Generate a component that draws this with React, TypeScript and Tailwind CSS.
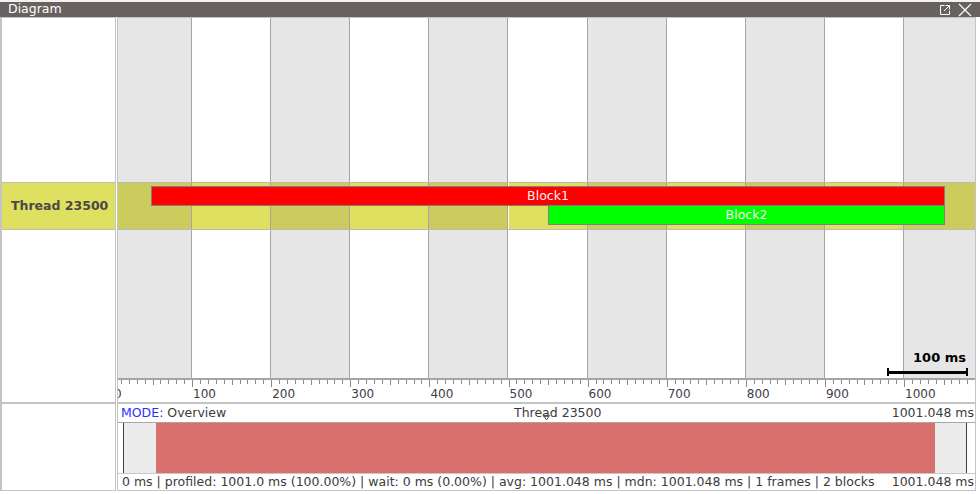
import React from 'react';

const PX_PER_MS = 0.791;
const ORIGIN = -5; // x of 0 ms inside the grid canvas
const ms = (t: number) => ORIGIN + t * PX_PER_MS;

const columns = Array.from({ length: 12 }, (_, k) => k);
const ticks = Array.from({ length: 112 }, (_, i) => i);

const TitleIcons = () => (
  <div className="flex items-center gap-[7px] mr-[8px]">
    <svg width="12" height="12" viewBox="0 0 12 12" fill="none" stroke="white" strokeWidth="1">
      <path d="M5.5 1.5 H1.5 V10.5 H10.5 V6.5" />
      <path d="M6.5 1.5 H10.5 V5.5" />
      <path d="M10.5 1.5 L5 7" />
    </svg>
    <svg width="14" height="14" viewBox="0 0 14 14" fill="none" stroke="white" strokeWidth="1.2">
      <path d="M1 1 L13 13 M13 1 L1 13" />
    </svg>
  </div>
);

const App = () => {
  return (
    <div className="w-[980px] h-[494px] bg-white overflow-hidden flex flex-col font-['DejaVu_Sans',sans-serif] text-[12.5px] text-[#3b3b3b]">
      <div className="h-[2px] bg-[#f2f2f2]" />
      {/* Title bar */}
      <div className="h-[15px] bg-[#67625f] flex items-center justify-between text-white leading-none">
        <span className="pl-[8px] text-[12.5px]">Diagram</span>
        <TitleIcons />
      </div>

      {/* Diagram */}
      <div className="flex h-[386px]">
        <div className="w-[116px] border-t border-b border-l-2 border-r border-[#c4c4c4] flex flex-col">
          <div className="h-[164px]" />
          <div className="h-[48px] bg-[#dfdf60] border-y border-[#bdbdbd] flex items-center pl-[9px] font-bold text-[12.5px] text-[#4a4848]">
            Thread 23500
          </div>
          <div className="flex-1" />
        </div>
        <div className="w-[859px] ml-[1px] border border-[#c4c4c4] flex flex-col">
          <div className="relative h-[360px] overflow-hidden">
            {columns.map((k) => {
              const grey = k % 2 === 0;
              return (
                <div
                  key={k}
                  className="absolute top-0 bottom-0 flex flex-col border-r border-[#a9a3a3]"
                  style={{ left: ms(k * 100), width: 100 * PX_PER_MS }}
                >
                  <div className={`h-[164px] ${grey ? 'bg-[#e6e6e6]' : 'bg-white'}`} />
                  <div className={`h-[48px] ${grey ? 'bg-[#cbcb5e]' : 'bg-[#dfdf60]'}`} />
                  <div className={`flex-1 ${grey ? 'bg-[#e6e6e6]' : 'bg-white'}`} />
                </div>
              );
            })}
            <div className="absolute left-0 right-0 top-[164px] h-[48px] border-y border-[#b9b9b9]" />
            <div
              className="absolute top-[168px] h-[20px] bg-[#ff0000] border border-[#7f7f7f] flex items-center justify-center text-[#f4f4f4] text-[12.5px] leading-none"
              style={{ left: 33, width: 794 }}
            >
              Block1
            </div>
            <div
              className="absolute top-[187px] h-[20px] bg-[#00ff00] border border-[#7f7f7f] flex items-center justify-center text-[#f4f4f4] text-[12.5px] leading-none"
              style={{ left: 430, width: 397 }}
            >
              Block2
            </div>
            {/* scale */}
            <div className="absolute left-[768px] top-[333px] w-[82px] flex flex-col items-end">
              <span className="font-bold text-[13px] leading-none text-black pr-[2px]">100 ms</span>
              <div className="mt-[4px] w-[81px] h-[8px] flex items-center border-x-2 border-black">
                <div className="h-[3px] w-full bg-black" />
              </div>
            </div>
          </div>
          {/* ruler */}
          <div className="relative flex-1 border-t-2 border-[#a9a3a3] overflow-hidden">
            {ticks.map((i) => {
              const major = i % 10 === 0;
              const mid = i % 5 === 0;
              return (
                <div
                  key={i}
                  className={`absolute top-0 w-px bg-[#8c8888] ${major ? 'h-[7px]' : mid ? 'h-[5px]' : 'h-[4px]'}`}
                  style={{ left: ms(i * 10) }}
                />
              );
            })}
            {columns.slice(0, 11).map((k) => (
              <span
                key={k}
                className="absolute top-[8px] text-[12px] leading-none text-[#3d3d48]"
                style={{ left: ms(k * 100) + 1 }}
              >
                {k * 100}
              </span>
            ))}
          </div>
        </div>
      </div>

      {/* Overview */}
      <div className="flex h-[88px]">
        <div className="w-[116px] border-t border-b border-l-2 border-r border-[#c4c4c4]" />
        <div className="w-[859px] ml-[1px] border border-[#c4c4c4] flex flex-col">
          <div className="h-[18px] grid grid-cols-[396px_1fr_auto] items-center leading-none">
            <span className="pl-[3px]">
              <span className="text-[#2d2dff]">MODE:</span> Overview
            </span>
            <span className="relative">
              Thread 23500
              <svg className="absolute left-[29px] top-[8px]" width="7" height="6" viewBox="0 0 7 6" fill="none" stroke="#555" strokeWidth="1">
                <path d="M0.5 0.5 H6.5 L3.5 5 Z" />
              </svg>
            </span>
            <span className="pr-[1px]">1001.048 ms</span>
          </div>
          <div className="h-[51px] border-t border-[#a6a6a6] flex">
            <div className="w-[5px]" />
            <div className="w-px bg-[#3f3f3f]" />
            <div className="w-[32px] bg-[#ececec]" />
            <div className="flex-1 bg-[#d8706e]" />
            <div className="w-[31px] bg-[#ececec]" />
            <div className="w-px bg-[#3f3f3f]" />
            <div className="w-[8px]" />
          </div>
          <div className="flex-1 border-t border-[#c8c8c8] flex items-center justify-between leading-none">
            <span className="pl-[4px]">
              0 ms | profiled: 1001.0 ms (100.00%) | wait: 0 ms (0.00%) | avg: 1001.048 ms | mdn: 1001.048 ms | 1 frames | 2 blocks
            </span>
            <span className="pr-[1px]">1001.048 ms</span>
          </div>
        </div>
      </div>
    </div>
  );
};

export default App;
